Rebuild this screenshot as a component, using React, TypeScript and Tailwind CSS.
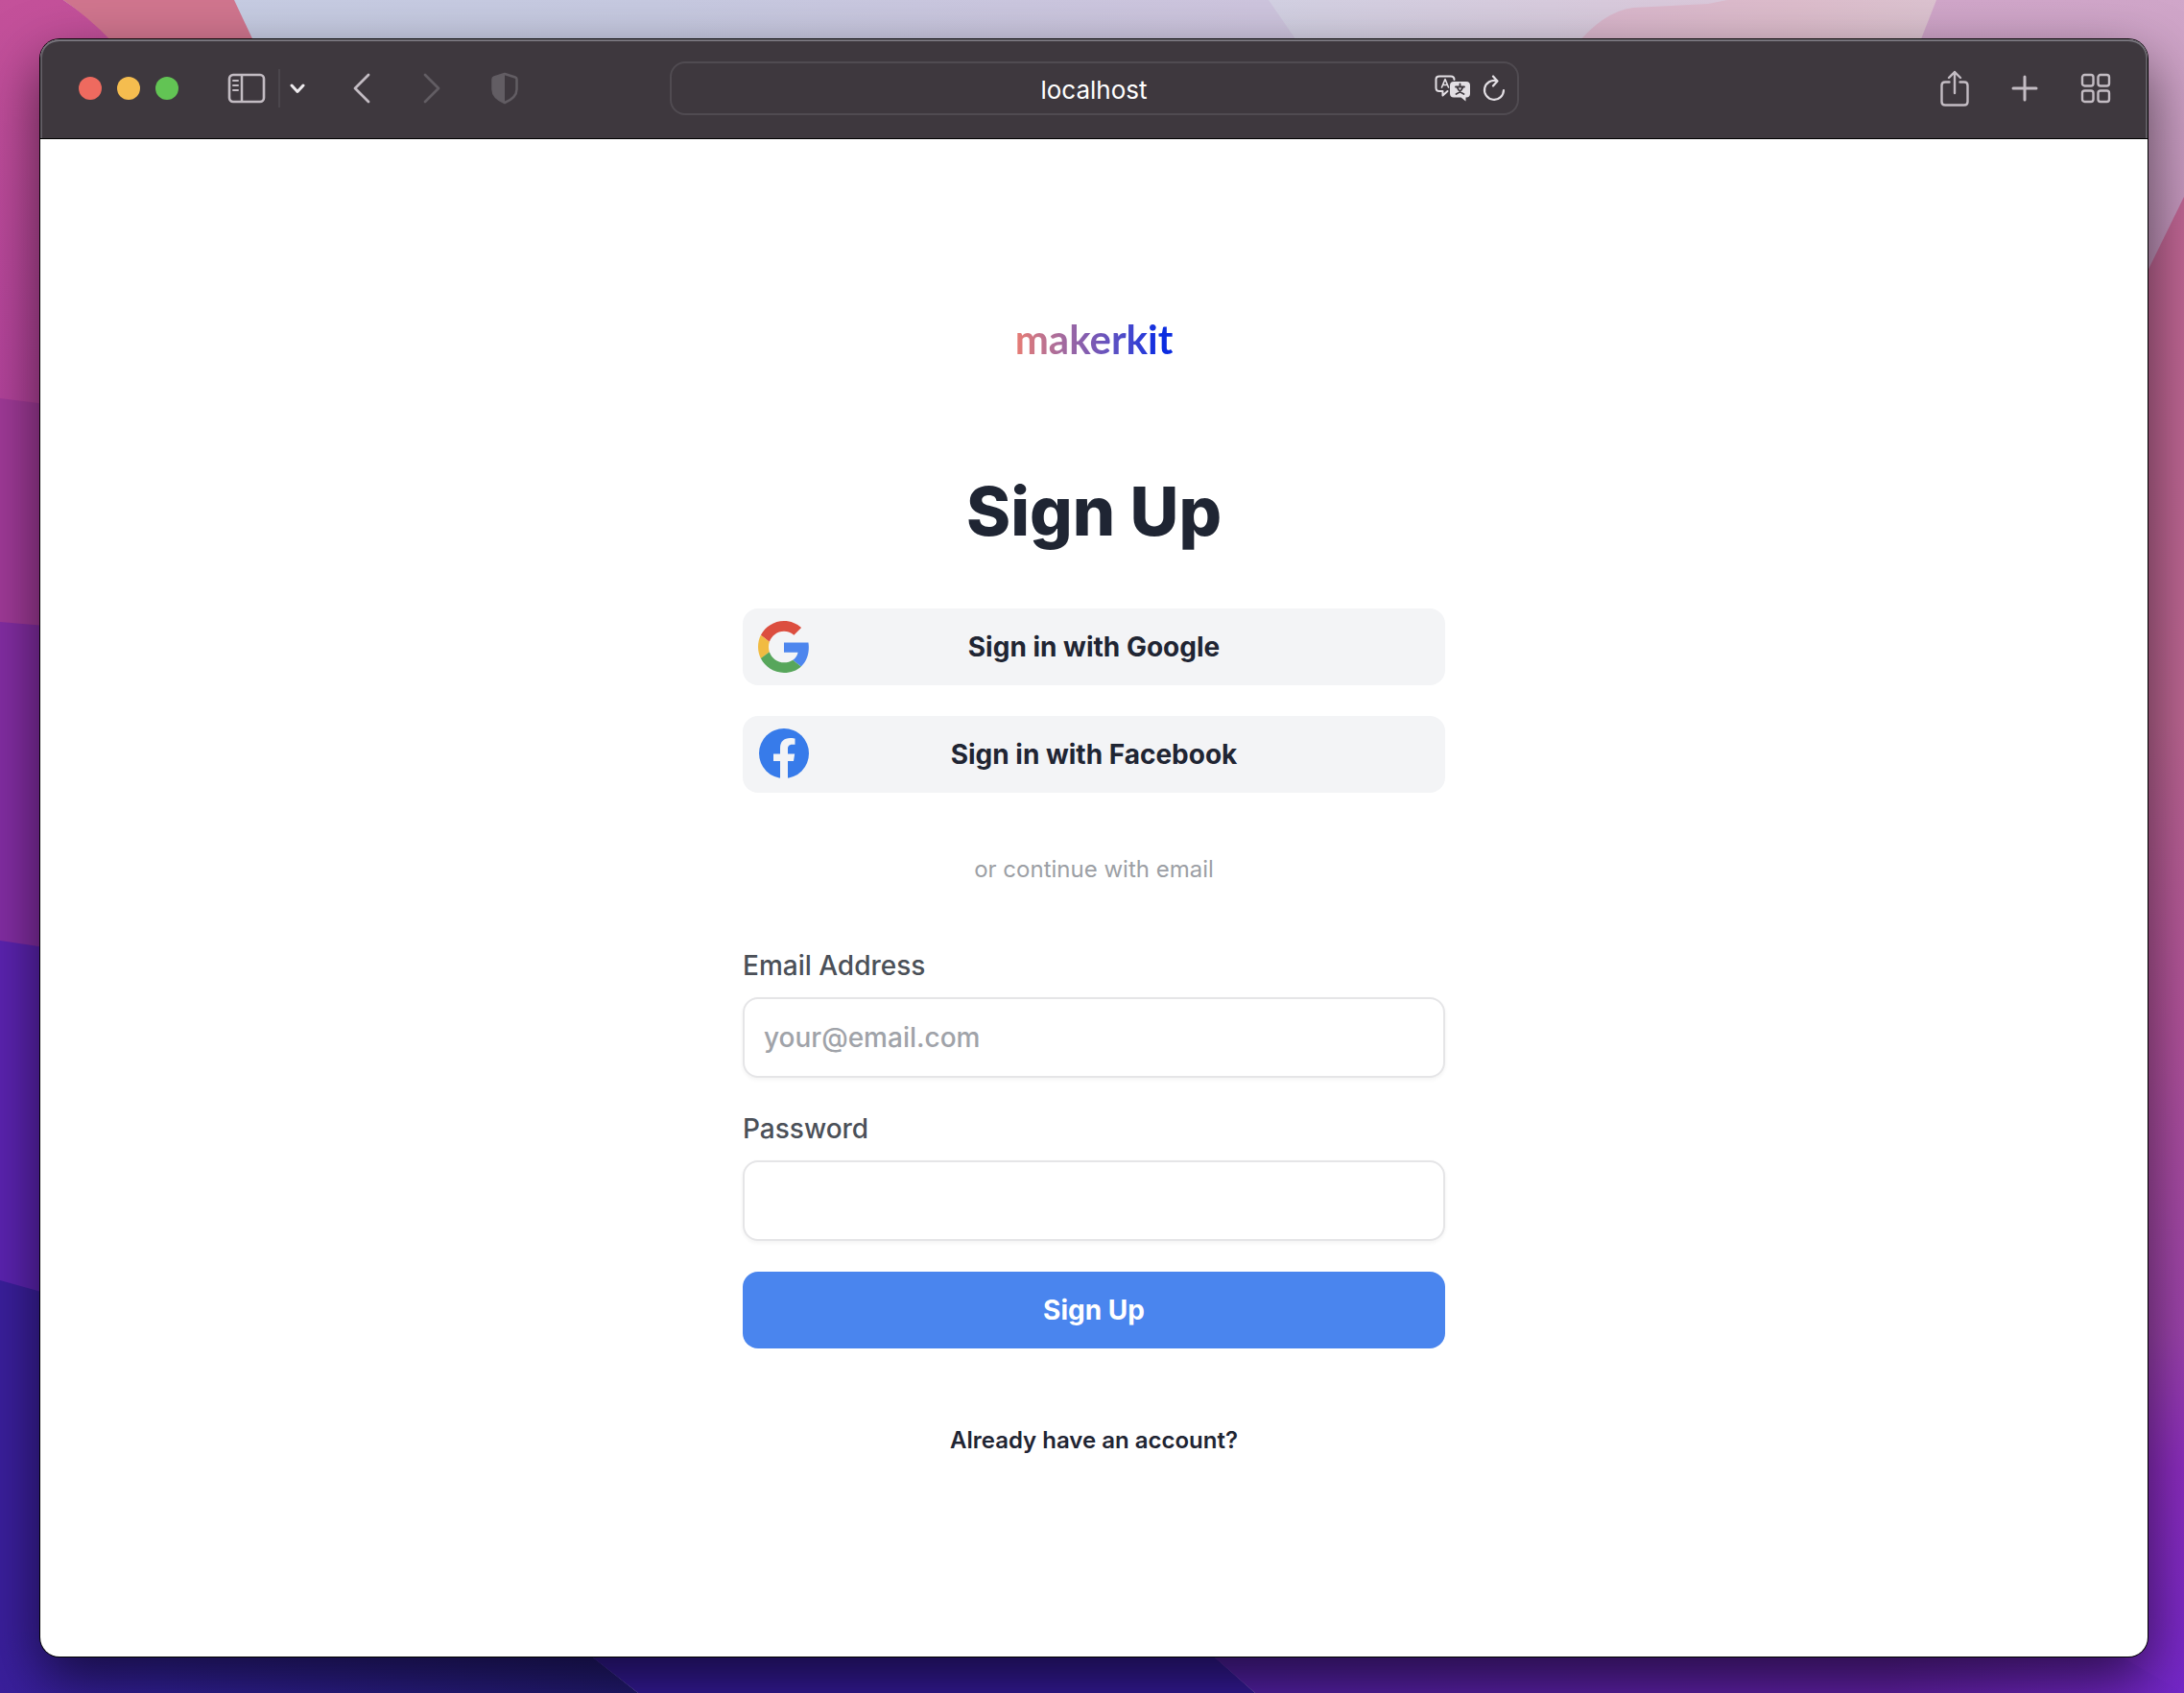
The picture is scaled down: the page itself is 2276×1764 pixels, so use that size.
import { ReactNode } from "react";

function Wallpaper() {
  return (
    <svg
      aria-hidden="true"
      className="absolute inset-0 h-full w-full"
      viewBox="0 0 2276 1764"
      preserveAspectRatio="none"
    >
      <defs>
        <linearGradient id="sky" x1="0" y1="0" x2="1" y2="0">
          <stop offset="0" stopColor="#c6cde3" />
          <stop offset="0.3" stopColor="#c6c9e0" />
          <stop offset="0.58" stopColor="#cdc4dd" />
          <stop offset="1" stopColor="#dac3d2" />
        </linearGradient>
        <linearGradient id="haze" x1="0" y1="0" x2="1" y2="0">
          <stop offset="0" stopColor="#d2d0e2" />
          <stop offset="0.6" stopColor="#dac8da" />
          <stop offset="1" stopColor="#dbc4d2" />
        </linearGradient>
        <linearGradient id="petal" x1="0" y1="0" x2="1" y2="0">
          <stop offset="0" stopColor="#d9b5cb" />
          <stop offset="0.5" stopColor="#dcbccb" />
          <stop offset="1" stopColor="#dbc6d2" />
        </linearGradient>
        <linearGradient id="leftTop" x1="0" y1="0" x2="0" y2="1">
          <stop offset="0" stopColor="#c4519a" />
          <stop offset="1" stopColor="#b2429b" />
        </linearGradient>
        <linearGradient id="leftBottom" x1="0" y1="0" x2="1" y2="0">
          <stop offset="0" stopColor="#3a1f9c" />
          <stop offset="0.25" stopColor="#32209a" />
          <stop offset="1" stopColor="#221a70" />
        </linearGradient>
        <linearGradient id="rightTop" x1="0" y1="0" x2="0" y2="1">
          <stop offset="0" stopColor="#d0a6c9" />
          <stop offset="1" stopColor="#bd8fb6" />
        </linearGradient>
        <linearGradient id="rightSide" x1="0" y1="0" x2="0" y2="1">
          <stop offset="0" stopColor="#bf6593" />
          <stop offset="0.35" stopColor="#bb6591" />
          <stop offset="0.55" stopColor="#b1529a" />
          <stop offset="0.76" stopColor="#9b42ab" />
          <stop offset="0.85" stopColor="#8a2cbd" />
          <stop offset="1" stopColor="#7427c9" />
        </linearGradient>
        <linearGradient id="bottomRight" x1="0" y1="0" x2="1" y2="0">
          <stop offset="0" stopColor="#5220a6" />
          <stop offset="0.7" stopColor="#6120a6" />
          <stop offset="1" stopColor="#7427c9" />
        </linearGradient>
      </defs>
      <rect width="2276" height="1764" fill="url(#sky)" />
      <path d="M1322 0H2100V200H1460Z" fill="url(#haze)" />
      <path d="M1640 50Q1670 12 1702 8L1780 4L1800 0H2100V100H1640Z" fill="url(#petal)" />
      <path d="M0 0H66Q170 70 260 200V440H0Z" fill="url(#leftTop)" />
      <path d="M66 0H244L400 330H260Q190 84 66 0Z" fill="#d0758e" />
      <path d="M0 415L200 440V700H0Z" fill="#a03a98" />
      <path d="M0 648L200 665V1020H0Z" fill="#832da3" />
      <path d="M0 980L200 1010V1400H0Z" fill="#5b23b0" />
      <path d="M0 1334L200 1390V1764H0Z" fill="#3a1f9c" />
      <path d="M0 1700H584L665 1764H0Z" fill="url(#leftBottom)" />
      <path d="M583 1700H1236L1308 1764H665Z" fill="#341a98" />
      <path d="M1235 1700H2276V1764H1308Z" fill="url(#bottomRight)" />
      <path d="M2018 0H2276V300H1900Z" fill="url(#rightTop)" />
      <path d="M2276 205L2200 360V1720L2276 1764Z" fill="url(#rightSide)" />
    </svg>
  );
}

function ToolbarButton({ label, children, className = "" }: { label: string; children: ReactNode; className?: string }) {
  return (
    <button type="button" aria-label={label} className={`flex h-10 items-center justify-center ${className}`}>
      {children}
    </button>
  );
}

function SidebarIcon() {
  return (
    <svg width="40" height="32" viewBox="0 0 40 32" fill="none" stroke="currentColor">
      <rect x="2" y="2" width="36" height="28" rx="4" strokeWidth="2.600" />
      <path d="M15 2V30" strokeWidth="2.5" />
      <path d="M6 8H11M6 13H11M6 18H11" strokeWidth="2" strokeLinecap="round" />
    </svg>
  );
}

function ShieldIcon() {
  return (
    <svg width="28" height="34" viewBox="0 0 28 34" fill="none">
      <path
        d="M14 2L25 5.500Q26.500 6 26.500 7.500V18C26.500 25 20 29.500 14 32C8 29.500 1.500 25 1.500 18V7.500Q1.500 6 3 5.500Z"
        stroke="currentColor"
        strokeWidth="2.500"
        strokeLinejoin="round"
      />
      <path d="M14 2L3 5.500Q1.500 6 1.500 7.500V18C1.500 25 8 29.500 14 32Z" fill="currentColor" />
    </svg>
  );
}

function TranslateIcon() {
  return (
    <svg width="38" height="28" viewBox="0 0 38 28" fill="none" strokeLinecap="round" strokeLinejoin="round">
      <path
        d="M13.500 17L8.500 21.500V17H5Q1.500 17 1.500 13.500V4.500Q1.500 1.500 5 1.500H17Q20.500 1.500 20.500 5"
        stroke="#e3dfe4"
        strokeWidth="2"
      />
      <path d="M7.500 13L11 4.500L14.500 13M8.700 10.500H13.300" stroke="#e3dfe4" strokeWidth="1.600" />
      <path
        d="M20 7H33Q37 7 37 11V19.500Q37 23.500 33 23.500H32.500V27.500L27.500 23.500H20Q16 23.500 16 19.500V11Q16 7 20 7Z"
        fill="#e3dfe4"
      />
      <path d="M26.500 9.500V12M22 12.500H31M29.500 12.500Q28 17.500 22.500 20M23.500 12.500Q25 17.500 30.500 20" stroke="#3e383e" strokeWidth="1.800" />
    </svg>
  );
}

function ReloadIcon() {
  return (
    <svg width="24" height="28" viewBox="0 0 24 28" fill="none" stroke="currentColor" strokeWidth="2.200" strokeLinecap="round" strokeLinejoin="round">
      <path d="M15 6.300A10 10 0 1 0 22 16" />
      <path d="M11 1.500L15.500 6.500L11 11.500" />
    </svg>
  );
}

function ShareIcon() {
  return (
    <svg width="30" height="38" viewBox="0 0 30 38" fill="none" stroke="currentColor" strokeWidth="2.400" strokeLinecap="round" strokeLinejoin="round">
      <path d="M9.500 12.500H5Q1.500 12.500 1.500 16V33Q1.500 36.500 5 36.500H25Q28.500 36.500 28.500 33V16Q28.500 12.500 25 12.500H20.500" />
      <path d="M15 24V2M9 8L15 2L21 8" />
    </svg>
  );
}

function GridIcon() {
  return (
    <svg width="32" height="32" viewBox="0 0 32 32" fill="none" stroke="currentColor" strokeWidth="2.400">
      <rect x="2" y="2" width="11.500" height="11.500" rx="2.500" />
      <rect x="18.500" y="2" width="11.500" height="11.500" rx="2.500" />
      <rect x="2" y="18.500" width="11.500" height="11.500" rx="2.500" />
      <rect x="18.500" y="18.500" width="11.500" height="11.500" rx="2.500" />
    </svg>
  );
}

function GoogleIcon() {
  return (
    <svg width="54" height="54" viewBox="0 0 48 48">
      <path fill="#dc4e3f" d="M24 9.500c3.540 0 6.710 1.220 9.210 3.600l6.850-6.850C35.900 2.380 30.470 0 24 0 14.620 0 6.510 5.380 2.560 13.220l7.980 6.190C12.430 13.720 17.740 9.500 24 9.500z" />
      <path fill="#4d86ee" d="M46.980 24.550c0-1.570-.15-3.090-.38-4.550H24v9.020h12.940c-.58 2.960-2.260 5.480-4.780 7.180l7.730 6c4.510-4.180 7.090-10.360 7.090-17.650z" />
      <path fill="#f1bb42" d="M10.530 28.590c-.48-1.450-.76-2.990-.76-4.590s.27-3.140.76-4.590l-7.980-6.190C.92 16.460 0 20.120 0 24c0 3.880.92 7.540 2.560 10.780l7.970-6.190z" />
      <path fill="#57a65b" d="M24 48c6.480 0 11.930-2.130 15.890-5.810l-7.730-6c-2.150 1.450-4.920 2.300-8.160 2.300-6.260 0-11.570-4.220-13.470-9.910l-7.980 6.190C6.510 42.620 14.620 48 24 48z" />
    </svg>
  );
}

function FacebookIcon() {
  return (
    <svg width="54" height="54" viewBox="0 0 54 54">
      <circle cx="27" cy="26" r="26" fill="#377bea" />
      <path
        fill="#f3f4f6"
        d="M23 53V34H16V26.500H23V20.500C23 13.500 27 10 33.500 10C36 10 38.500 10.500 38.500 10.500V16.800H35.500C32 16.800 31 19 31 21.300V26.500H38.200L37 34H31V53Z"
      />
    </svg>
  );
}

function BrowserToolbar() {
  return (
    <header className="grid h-[104px] grid-cols-[1fr_885px_1fr] items-center rounded-t-[20px] border-b border-black bg-[#3e383e] pb-0.5 text-[#c3bcc3] shadow-[inset_0_2px_0_#77747c,inset_2px_0_0_#5f5b62,inset_-2px_0_0_#5f5b62]">
      <div className="flex items-center pl-10">
        <div className="flex gap-4">
          <button type="button" aria-label="Close" className="size-6 rounded-full bg-[#ee6a5f]" />
          <button type="button" aria-label="Minimize" className="size-6 rounded-full bg-[#f5bd4f]" />
          <button type="button" aria-label="Zoom" className="size-6 rounded-full bg-[#62c454]" />
        </div>
        <ToolbarButton label="Show sidebar" className="ml-[51px]">
          <SidebarIcon />
        </ToolbarButton>
        <span className="ml-[13px] h-10 w-[2px] bg-[#4b464c]" />
        <ToolbarButton label="Tab groups" className="ml-[10px] text-[#efecef]">
          <svg width="16" height="12" viewBox="0 0 16 12" fill="none" stroke="currentColor" strokeWidth="3" strokeLinecap="round" strokeLinejoin="round">
            <path d="M2 3L8 9.500L14 3" />
          </svg>
        </ToolbarButton>
        <ToolbarButton label="Back" className="ml-[50px]">
          <svg width="18" height="32" viewBox="0 0 18 32" fill="none" stroke="currentColor" strokeWidth="2.800" strokeLinecap="round" strokeLinejoin="round">
            <path d="M16 2L2 16L16 30" />
          </svg>
        </ToolbarButton>
        <ToolbarButton label="Forward" className="ml-[55px] text-[#625d63]">
          <svg width="18" height="32" viewBox="0 0 18 32" fill="none" stroke="currentColor" strokeWidth="2.800" strokeLinecap="round" strokeLinejoin="round">
            <path d="M2 2L16 16L2 30" />
          </svg>
        </ToolbarButton>
        <ToolbarButton label="Privacy report" className="ml-[53px] text-[#625d63]">
          <ShieldIcon />
        </ToolbarButton>
      </div>
      <div className="grid h-14 grid-cols-[80px_1fr_80px] items-center rounded-2xl border-2 border-[#504b51]">
        <input
          aria-label="Address"
          type="text"
          defaultValue="localhost"
          className="col-start-2 w-full bg-transparent pt-1 text-center text-[26px] leading-8 text-white outline-none"
        />
        <div className="flex items-center justify-end gap-3 pr-3 text-[#e3dfe4]">
          <button type="button" aria-label="Translate page">
            <TranslateIcon />
          </button>
          <button type="button" aria-label="Reload page">
            <ReloadIcon />
          </button>
        </div>
      </div>
      <div className="flex items-center justify-end pr-[38px]">
        <ToolbarButton label="Share">
          <ShareIcon />
        </ToolbarButton>
        <ToolbarButton label="New tab" className="ml-11">
          <svg width="28" height="28" viewBox="0 0 28 28" fill="none" stroke="currentColor" strokeWidth="3" strokeLinecap="round">
            <path d="M14 2V26M2 14H26" />
          </svg>
        </ToolbarButton>
        <ToolbarButton label="Tab overview" className="ml-11">
          <GridIcon />
        </ToolbarButton>
      </div>
    </header>
  );
}

function ProviderButton({ icon, children }: { icon: ReactNode; children: ReactNode }) {
  return (
    <button
      type="button"
      className="grid h-20 w-full grid-cols-[54px_1fr_54px] items-center rounded-2xl bg-[#f3f4f6] px-4 text-[28px] font-bold text-[#1f2533]"
    >
      {icon}
      <span>{children}</span>
    </button>
  );
}

function Field({ id, label, type, placeholder }: { id: string; label: string; type: string; placeholder?: string }) {
  return (
    <div className="flex flex-col gap-3">
      <label htmlFor={id} className="text-[28px] leading-[42px] font-medium text-[#4b5058]">
        {label}
      </label>
      <input
        id={id}
        type={type}
        placeholder={placeholder}
        className="h-[84px] w-full rounded-2xl border-2 border-[#e5e5e7] bg-white px-5 text-[28px] font-medium text-[#1f2533] shadow-[0_2px_4px_rgba(0,0,0,0.05)] outline-none placeholder:text-[#a0a3a9]"
      />
    </div>
  );
}

export default function App() {
  return (
    <div className="relative flex min-h-screen flex-col pt-[41px] pr-[38px] pb-[38px] pl-[42px] font-['Inter',sans-serif]">
      <Wallpaper />
      <div className="relative flex grow flex-col rounded-[20px] bg-white shadow-[0_0_0_1px_#000,0_24px_60px_rgba(0,0,0,0.6)]">
        <BrowserToolbar />
        <main className="flex grow flex-col items-center px-8 pt-[178px] pb-16">
          <a
            href="#"
            className="bg-linear-to-r from-[#e87c72] via-[#7a58b4] via-50% to-[#0b2ce0] to-90% bg-clip-text font-['Lato',sans-serif] text-[42px] leading-[60px] font-bold text-transparent"
          >
            makerkit
          </a>
          <h1 className="mt-[100px] text-[70px] leading-[100px] font-extrabold text-[#1f2533]">Sign Up</h1>
          <form className="mt-[51px] flex w-full max-w-[732px] flex-col" onSubmit={(e) => e.preventDefault()}>
            <div className="flex flex-col gap-8">
              <ProviderButton icon={<GoogleIcon />}>Sign in with Google</ProviderButton>
              <ProviderButton icon={<FacebookIcon />}>Sign in with Facebook</ProviderButton>
            </div>
            <p className="mt-16 text-center text-[24px] leading-8 text-[#9c9fa5]">or continue with email</p>
            <div className="mt-[63px] flex flex-col gap-8">
              <Field id="email" label="Email Address" type="email" placeholder="your@email.com" />
              <Field id="password" label="Password" type="password" />
              <button type="submit" className="h-20 w-full rounded-2xl bg-[#4a85ee] text-[28px] font-bold text-white">
                Sign Up
              </button>
            </div>
          </form>
          <a href="#" className="mt-20 text-[24px] leading-8 font-semibold text-[#1f2533]">
            Already have an account?
          </a>
        </main>
      </div>
    </div>
  );
}
